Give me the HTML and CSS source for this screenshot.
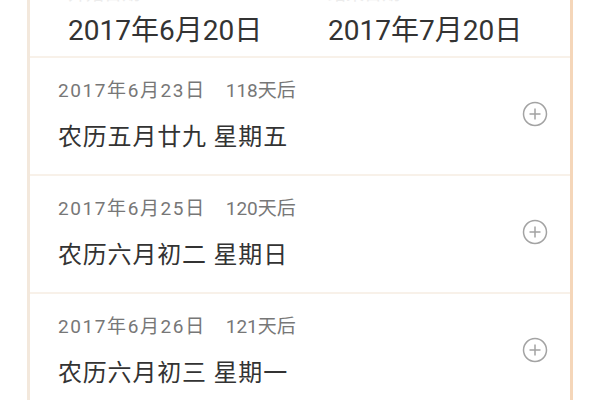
FILE: index.html
```html
<!DOCTYPE html>
<html lang="zh">
<head>
<meta charset="utf-8">
<link rel="stylesheet" href="styles.css">
</head>
<body>
<div class="card">
  <div class="header">
    <div class="col col-a">
      <div class="label">开始日期</div>
      <div class="big">2017年6月20日</div>
    </div>
    <div class="col col-b">
      <div class="label">结束日期</div>
      <div class="big">2017年7月20日</div>
    </div>
  </div>
  <div class="row">
    <div class="info">
      <div class="date"><span class="day">2017年6月23日</span><span class="after">118天后</span></div>
      <div class="lunar">农历五月廿九 星期五</div>
    </div>
    <svg class="plus" width="26" height="26" viewBox="0 0 26 26"><circle cx="13" cy="13" r="11.5" fill="none" stroke="#a3a3a3" stroke-width="1.5"/><path d="M13 7.5v11M7.5 13h11" stroke="#a3a3a3" stroke-width="1.5" fill="none"/></svg>
  </div>
  <div class="row">
    <div class="info">
      <div class="date"><span class="day">2017年6月25日</span><span class="after">120天后</span></div>
      <div class="lunar">农历六月初二 星期日</div>
    </div>
    <svg class="plus" width="26" height="26" viewBox="0 0 26 26"><circle cx="13" cy="13" r="11.5" fill="none" stroke="#a3a3a3" stroke-width="1.5"/><path d="M13 7.5v11M7.5 13h11" stroke="#a3a3a3" stroke-width="1.5" fill="none"/></svg>
  </div>
  <div class="row">
    <div class="info">
      <div class="date"><span class="day">2017年6月26日</span><span class="after">121天后</span></div>
      <div class="lunar">农历六月初三 星期一</div>
    </div>
    <svg class="plus" width="26" height="26" viewBox="0 0 26 26"><circle cx="13" cy="13" r="11.5" fill="none" stroke="#a3a3a3" stroke-width="1.5"/><path d="M13 7.5v11M7.5 13h11" stroke="#a3a3a3" stroke-width="1.5" fill="none"/></svg>
  </div>
</div>
</body>
</html>
```
FILE: styles.css
```css
html, body {
  margin: 0;
  padding: 0;
  background: #ffffff;
  height: 400px;
  overflow: hidden;
}
body {
  font-family: Roboto, "Noto Sans CJK SC", sans-serif;
}
.card {
  margin: 0 27px;
  background: #fff;
  border-left: 3px solid #f3e8dc;
  border-right: 3px solid #f5d6b9;
}
.header {
  display: grid;
  grid-template-columns: 268px 1fr;
  margin-top: -18px;
  padding-bottom: 7px;
  border-bottom: 2px solid #f8f1e9;
}
.col-a { padding-left: 38px; }
.col-b { padding-left: 30px; }
.label {
  font-size: 18px;
  line-height: 24px;
  color: #ececec;
}
.big {
  font-size: 28px;
  line-height: 36px;
  color: #333;
  margin-top: 7px;
}
.row {
  display: flex;
  align-items: center;
  justify-content: space-between;
  padding: 21px 22px 22px 28px;
  border-bottom: 2px solid #f8f1e9;
}
.date {
  font-size: 19px;
  line-height: 24px;
  color: #777;
}
.day {
  letter-spacing: 1.6px;
}
.after {
  margin-left: 20px;
}
.lunar {
  font-size: 24px;
  line-height: 30px;
  letter-spacing: 0.8px;
  color: #333;
  margin-top: 19px;
}
.plus {
  display: block;
  margin-top: -4px;
}
```
